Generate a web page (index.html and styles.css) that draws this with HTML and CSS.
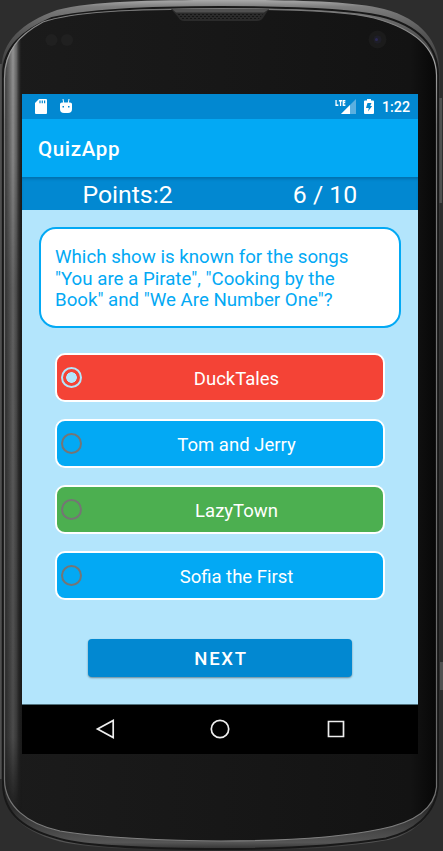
FILE: index.html
```html
<!DOCTYPE html>
<html lang="en">
<head>
<meta charset="utf-8">
<title>QuizApp</title>
<link rel="stylesheet" href="styles.css">
</head>
<body>
<div class="device">
  <svg class="frame" viewBox="0 0 443 851" aria-hidden="true">
    <defs>
      <linearGradient id="rim" x1="0" y1="0" x2="0" y2="1">
        <stop offset="0" stop-color="#aaa"/><stop offset=".008" stop-color="#7d7d7d"/><stop offset=".04" stop-color="#555"/><stop offset=".08" stop-color="#404040"/><stop offset=".95" stop-color="#2c2c2c"/><stop offset=".99" stop-color="#555"/><stop offset="1" stop-color="#282828"/>
      </linearGradient>
      <linearGradient id="line" x1="0" y1="0" x2="0" y2="1">
        <stop offset="0" stop-color="#777"/><stop offset=".06" stop-color="#a5a5a5"/><stop offset=".14" stop-color="#777"/><stop offset=".9" stop-color="#686868"/><stop offset="1" stop-color="#808080"/>
      </linearGradient>
      <linearGradient id="side" x1="4" y1="0" x2="22" y2="0" gradientUnits="userSpaceOnUse">
        <stop offset="0" stop-color="#777" stop-opacity=".35"/><stop offset=".5" stop-color="#aaa" stop-opacity=".85"/><stop offset=".7" stop-color="#999" stop-opacity=".6"/><stop offset="1" stop-color="#222" stop-opacity="0"/>
      </linearGradient>
      <linearGradient id="fade" x1="0" y1="0" x2="0" y2="1">
        <stop offset="0" stop-color="#fff"/><stop offset=".15" stop-color="#e0e0e0"/><stop offset=".32" stop-color="#999"/><stop offset=".7" stop-color="#777"/><stop offset=".9" stop-color="#666"/><stop offset="1" stop-color="#000"/>
      </linearGradient>
      <linearGradient id="face" x1="0" y1="0" x2="1" y2="0">
        <stop offset="0" stop-color="#1b1b1b"/><stop offset=".5" stop-color="#171717"/><stop offset=".94" stop-color="#131313"/><stop offset="1" stop-color="#070707"/>
      </linearGradient>
      <pattern id="mesh" width="4" height="4" patternUnits="userSpaceOnUse"><path d="M0 0h2v1H0zM2 2h2v1H2z" fill="#151515"/></pattern>
      <mask id="sideMask"><rect y="40" width="24" height="775" fill="url(#fade)"/></mask>
      <clipPath id="inside"><path d="M4.500 80C4 51 19 35 43 22C72 12 126 9 221 9S354 13 374 18C414 29 436 47 436.500 75V787C434 813 406 824 381 829C338 838 275 841 221 841S93 837 60 831C27 824 5 806 4.500 780Z"/></clipPath>
    </defs>
    <path class="key" d="M0 64h2v715H0z"/>
    <path class="key" d="M439 98h3v105h-3zM440 662h3v28h-3z"/>
    <path d="M1.500 70C1 42 21 23 57 10C91 1 150 0 221 0S350 1 384 9C422 19 439 42 439.500 70V785C437 815 414 834 388 840C338 849 275 851 221 851S98 849 67 843C24 834 2 813 1.500 785Z" fill="url(#rim)"/>
    <path d="M3 75C3 48 22 31 52 18C88 10 145 7 221 7S350 9 380 16C418 25 438 46 438 75V785C436 816 412 832 386 838.500C338 846 285 849 221 849S98 847 66 840.500C24 831 3 814 3 783Z" fill="none" stroke="#181818" stroke-width="2"/>
    <path d="M4.500 80C4 51 19 35 43 22C72 12 126 9 221 9S354 13 374 18C414 29 436 47 436.500 75V787C434 813 406 824 381 829C338 838 275 841 221 841S93 837 60 831C27 824 5 806 4.500 780Z" fill="url(#face)" stroke="url(#line)" stroke-width="1.200"/>
    <g clip-path="url(#inside)"><rect x="4" y="40" width="19" height="775" fill="url(#side)" mask="url(#sideMask)"/></g>
    <path d="M171 9h98l-6 9q-2 3-6 3H184q-4 0-6-4z" fill="#2b2b2b"/>
    <path d="M178 14h85l-3 4q-2 2-4 2H184q-3 0-5-3z" fill="url(#mesh)"/>
    <path d="M172 9h97l-5 3.500h-88z" fill="#505050"/>
    <circle cx="51.500" cy="40" r="6" fill="#202020"/><circle cx="67" cy="40" r="6" fill="#202020"/>
    <circle cx="377.500" cy="39.500" r="9" fill="#1b1b1b"/><circle cx="377.500" cy="39.500" r="4" fill="#1e1e27"/><circle cx="376.500" cy="39.500" r="1.500" fill="#2b2854"/>
  </svg>

  <main class="screen">
    <header class="status">
      <svg class="sd" viewBox="0 0 12 15"><path d="M4 0h7q1 0 1 1v13q0 1-1 1H1q-1 0-1-1V4z" fill="#fff"/><path d="M5 1.500v2.800M7.300 1.500v2.800M9.600 1.500v2.800" stroke="#0288d1" stroke-width="1.200"/></svg>
      <svg class="bot" viewBox="0 0 12 15"><path d="M3 0l.7 4M9 0l-.7 4" stroke="#fff"/><path d="M0 5q0-1.500 2-1.500h8q2 0 2 1.500v5q0 4-4 4H4q-4 0-4-4z" fill="#fff"/><path d="M2.500 7H4v1.500H2.500zM8 7h1.500v1.500H8z" fill="#0288d1"/></svg>
      <span class="network"><span class="lte">LTE</span><svg class="signal" viewBox="0 0 15 15"><path d="M15 0v15H0z" fill="#5bb0e0"/><path d="M9 6v9H0z" fill="#fff"/></svg></span>
      <svg class="battery" viewBox="0 0 10 15"><path d="M3 0h4v1.500h2q1 0 1 1V14q0 1-1 1H1q-1 0-1-1V2.500q0-1 1-1h2z" fill="#fff"/><path d="M3.500 4h4L6.200 7h2L4 12.500 4.800 9H2z" fill="#0288d1"/></svg>
      <time>1:22</time>
    </header>
    <h1 class="title">QuizApp</h1>
    <div class="score"><span>Points:2</span><span>6 / 10</span></div>
    <section class="quiz">
      <div class="question">Which show is known for the songs<br>"You are a Pirate", "Cooking by the<br>Book" and "We Are Number One"?</div>
      <div class="answers">
        <div class="answer wrong"><i class="radio checked"></i><span>DuckTales</span></div>
        <div class="answer"><i class="radio"></i><span>Tom and Jerry</span></div>
        <div class="answer correct"><i class="radio"></i><span>LazyTown</span></div>
        <div class="answer"><i class="radio"></i><span>Sofia the First</span></div>
      </div>
      <button class="next">NEXT</button>
    </section>
    <nav class="nav">
      <svg viewBox="0 0 24 24"><path d="M20.200 3.500v17L4.500 12z"/></svg>
      <svg viewBox="0 0 24 24"><circle cx="12" cy="12" r="8.700"/></svg>
      <svg viewBox="0 0 24 24"><path d="M4.500 4.500h15v15h-15z"/></svg>
    </nav>
  </main>
</div>
</body>
</html>
```
FILE: styles.css
```css
* { box-sizing: border-box; }
body { margin: 0; background: #2d2d2d; font-family: Roboto, sans-serif; overflow: hidden; }
.device { position: relative; width: 443px; height: 851px; padding: 94px 25px 97px 22px; }
.frame { position: absolute; inset: 0; width: 443px; height: 851px; }
.key { fill: #505050; }
.screen { position: relative; display: flex; flex-direction: column; width: 396px; height: 660px; background: #b3e5fc; color: #fff; }
.status { display: flex; align-items: center; height: 25px; padding: 0 8px 0 13px; background: #0288d1; }
.sd { width: 12px; height: 15px; }
.bot { width: 12px; height: 15px; margin: -1px 0 0 13px; }
.network { display: flex; align-items: flex-start; margin-left: auto; }
.lte { font: 800 8.500px/8px "Open Sans", sans-serif; transform: scaleX(.72); transform-origin: right; margin-right: -5px; }
.signal { width: 15px; height: 15px; }
.battery { width: 10px; height: 15px; margin-left: 8px; }
time { margin-left: 8px; font-size: 14.250px; font-weight: 500; line-height: 25px; padding-top: 1px; }
.title { height: 58px; margin: 0; padding: 2px 16px 0; background: #03a9f4; font-size: 20.500px; font-weight: 500; line-height: 56px; letter-spacing: .65px; }
.score { display: grid; grid-template-columns: 197px 185px; height: 33px; padding: 0 7px; background: #0288d1; box-shadow: inset 0 3px 3px -1px #0270ac; text-align: center; font-size: 24.800px; line-height: 36px; }
.score span:last-child { padding-left: 13px; }
.quiz { display: flex; flex-direction: column; height: 494px; padding: 17px 17px 0; }
.question { height: 101px; padding: 18px 14px; border: 2px solid #03a9f4; border-radius: 17px; background: #fff; color: #03a9f4; font-size: 18.700px; line-height: 21.700px; white-space: nowrap; }
.answers { display: grid; gap: 17px; margin: 25px 16px 0; }
.answer { display: flex; align-items: center; height: 49px; padding-left: 4px; border: 2px solid #fff; border-radius: 10px; background: #03a9f4; font-size: 18.500px; }
.answer span { flex: 1; padding: 2px 0 0 8px; text-align: center; }
.wrong { background: #f44336; }
.correct { background: #4caf50; }
.radio { width: 21px; height: 21px; border: 2px solid #757575; border-radius: 50%; }
.checked { border-color: #b3e5fc; background: radial-gradient(circle, #b3e5fc 0 5px, transparent 5.600px); }
.next { width: 264px; height: 38px; margin: 39px 0 0 49px; padding: 1px 0 0 2px; border: 0; border-radius: 4px; background: #0288d1; box-shadow: 0 1px 2px #0006; color: #fff; font: 500 18.500px/38px Roboto, sans-serif; letter-spacing: 1.700px; }
.nav { display: flex; justify-content: center; align-items: center; gap: 91.500px; height: 50px; padding-bottom: 1px; background: #000; border-top: 1px solid #51717c; }
.nav svg { width: 24px; height: 24px; fill: none; stroke: #eee; stroke-width: 1.700; }
```
